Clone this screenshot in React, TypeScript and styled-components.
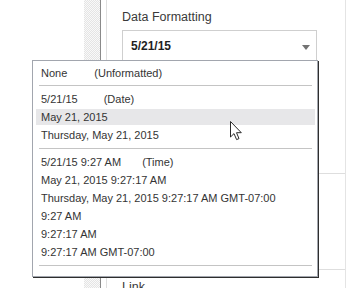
import React from 'react';
import styled, { createGlobalStyle } from 'styled-components';

const GlobalStyle = createGlobalStyle`
  html, body {
    margin: 0;
    padding: 0;
    background: #ffffff;
  }
  body {
    font-family: 'Liberation Sans', Arial, sans-serif;
    width: 347px;
    height: 288px;
    overflow: hidden;
  }
`;

const Page = styled.div`
  position: relative;
  display: flex;
  width: 347px;
  height: 288px;
  overflow: hidden;
  background: #ffffff;
`;

const LeftSpace = styled.div`
  width: 84px;
  flex: none;
`;

const Stripe = styled.div`
  width: 16px;
  flex: none;
  border-right: 1px solid #8a8a8a;
  background: repeating-conic-gradient(#e4e4e4 0 25%, #f9f9f9 0 50%) 0 0 / 2px 2px;
`;

const Panel = styled.div`
  flex: 1;
  margin: 0 1px 0 5px;
  border-left: 1px solid #e0e0e0;
  border-right: 1px solid #e4e4e4;
  display: flex;
  flex-direction: column;
`;

const Section = styled.div<{ $height?: number }>`
  padding: 9px 0 0 15px;
  height: ${(p) => (p.$height ? `${p.$height}px` : 'auto')};
  flex: none;
  border-bottom: 1px solid #dedede;
  box-sizing: border-box;
`;

const SectionTitle = styled.div`
  font-size: 12.5px;
  line-height: 16px;
  color: #3a3a3a;
`;

const Select = styled.div`
  margin-top: 5px;
  width: 195px;
  height: 32px;
  box-sizing: border-box;
  border: 1px solid #cfcfcf;
  display: flex;
  align-items: center;
  justify-content: space-between;
  padding: 0 6px 0 8px;
`;

const SelectValue = styled.span`
  font-size: 12px;
  font-weight: bold;
  color: #1e1e1e;
`;

const Caret = styled.span`
  width: 0;
  height: 0;
  border-left: 4px solid transparent;
  border-right: 4px solid transparent;
  border-top: 5px solid #737373;
  margin-top: 2px;
`;

const Menu = styled.div`
  position: absolute;
  left: 32px;
  top: 60px;
  width: 286px;
  box-sizing: border-box;
  background: #ffffff;
  border: 1px solid #a2a6ae;
  box-shadow: 1px 1px 0 #2e2e2e;
  padding: 4px 2px 5px 3px;
  display: flex;
  flex-direction: column;
`;

const Item = styled.div<{ $active?: boolean }>`
  height: 16px;
  margin-bottom: 2px;
  padding-left: 5px;
  display: flex;
  align-items: center;
  font-size: 11px;
  color: #343434;
  white-space: nowrap;
  background: ${(p) => (p.$active ? '#e7e7e9' : 'transparent')};
`;

const Hint = styled.span<{ $gap: number }>`
  margin-left: ${(p) => p.$gap}px;
`;

const Divider = styled.div<{ $top: number }>`
  height: 1px;
  margin: ${(p) => p.$top}px 3px 5px;
  background: #c4c4c4;
`;

const Cursor = styled.svg`
  position: absolute;
  left: 229px;
  top: 120px;
`;

type Entry =
  | { label: string; hint?: string; gap?: number; active?: boolean }
  | { divider: number };

const entries: Entry[] = [
  { label: 'None', hint: '(Unformatted)', gap: 27 },
  { divider: 2 },
  { label: '5/21/15', hint: '(Date)', gap: 26 },
  { label: 'May 21, 2015', active: true },
  { label: 'Thursday, May 21, 2015' },
  { divider: 3 },
  { label: '5/21/15 9:27 AM', hint: '(Time)', gap: 21 },
  { label: 'May 21, 2015 9:27:17 AM' },
  { label: 'Thursday, May 21, 2015 9:27:17 AM GMT-07:00' },
  { label: '9:27 AM' },
  { label: '9:27:17 AM' },
  { label: '9:27:17 AM GMT-07:00' },
  { divider: 3 },
];

export default function App() {
  return (
    <>
      <GlobalStyle />
      <Page>
        <LeftSpace />
        <Stripe />
        <Panel>
          <Section $height={174}>
            <SectionTitle>Data Formatting</SectionTitle>
            <Select>
              <SelectValue>5/21/15</SelectValue>
              <Caret />
            </Select>
          </Section>
          <Section $height={96} />
          <Section>
            <SectionTitle>Link</SectionTitle>
          </Section>
        </Panel>

        <Menu>
          {entries.map((e, i) =>
            'divider' in e ? (
              <Divider key={i} $top={e.divider} />
            ) : (
              <Item key={i} $active={e.active}>
                {e.label}
                {e.hint && <Hint $gap={e.gap ?? 20}>{e.hint}</Hint>}
              </Item>
            )
          )}
        </Menu>

        <Cursor width="14" height="22" viewBox="0 0 14 22">
          <path
            d="M1.5 1.5 L1.5 17 L5 13.6 L7.6 19.6 L10 18.6 L7.5 12.7 L12.3 12.7 Z"
            fill="#ffffff"
            stroke="#2a2a2a"
            strokeWidth="1"
            strokeLinejoin="miter"
          />
        </Cursor>
      </Page>
    </>
  );
}
